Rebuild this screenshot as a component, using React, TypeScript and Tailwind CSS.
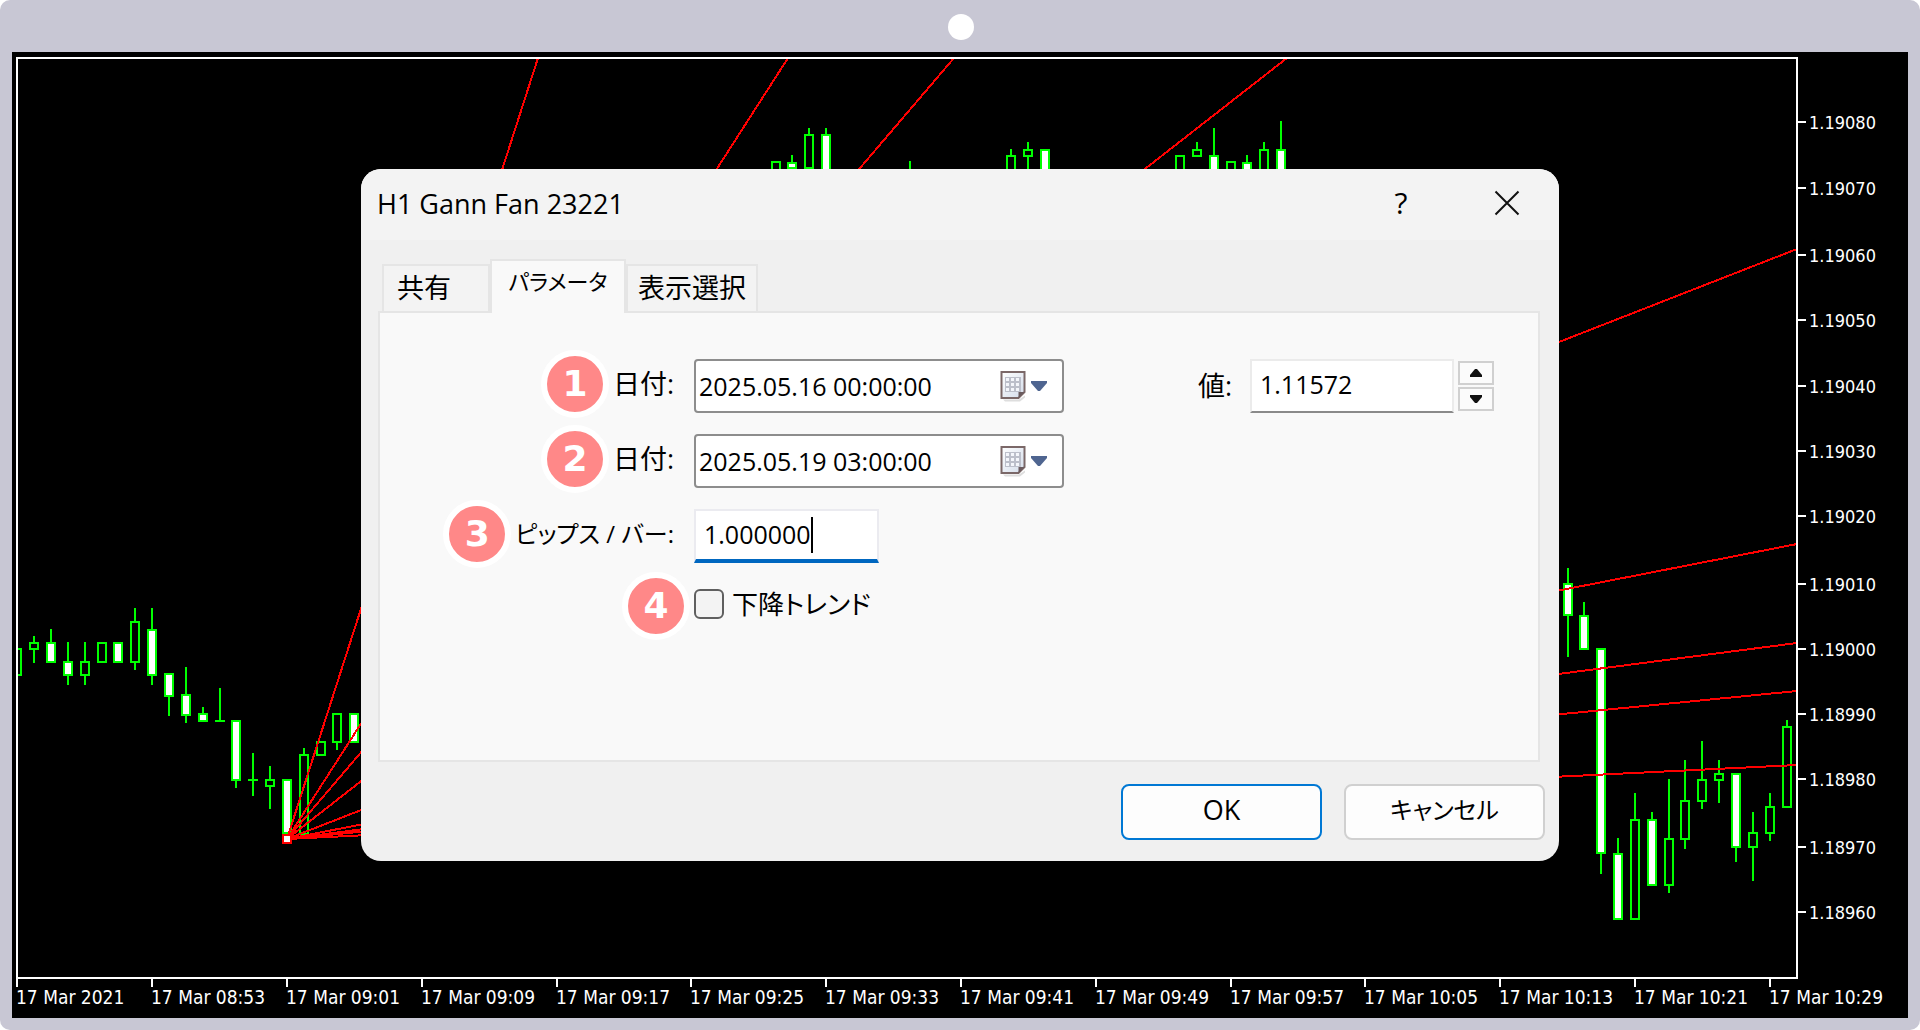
import type { ReactNode } from 'react';

type Candle = { i: number; high: number; top: number; bottom: number; low: number; filled?: boolean };

const JP = "font-['Open_Sans','Noto_Sans_CJK_JP',sans-serif]";

const BAR_STEP = 16.85;
const CHART_LEFT = 17.3;
const barX = (i: number) => Math.round(CHART_LEFT + i * BAR_STEP);

const CANDLES: Candle[] = [
  { i: 0, high: 649, top: 649, bottom: 675, low: 675 },
  { i: 1, high: 636, top: 643, bottom: 649, low: 662 },
  { i: 2, high: 629, top: 643, bottom: 662, low: 662, filled: true },
  { i: 3, high: 642, top: 662, bottom: 675, low: 684, filled: true },
  { i: 4, high: 642, top: 662, bottom: 675, low: 684 },
  { i: 5, high: 643, top: 643, bottom: 662, low: 662 },
  { i: 6, high: 643, top: 643, bottom: 662, low: 662, filled: true },
  { i: 7, high: 608, top: 622, bottom: 662, low: 669 },
  { i: 8, high: 608, top: 630, bottom: 675, low: 684, filled: true },
  { i: 9, high: 674, top: 674, bottom: 696, low: 715, filled: true },
  { i: 10, high: 667, top: 695, bottom: 715, low: 722, filled: true },
  { i: 11, high: 707, top: 714, bottom: 721, low: 721, filled: true },
  { i: 12, high: 688, top: 721, bottom: 721, low: 721 },
  { i: 13, high: 721, top: 721, bottom: 780, low: 787, filled: true },
  { i: 14, high: 753, top: 780, bottom: 780, low: 795 },
  { i: 15, high: 766, top: 780, bottom: 786, low: 808 },
  { i: 16, high: 780, top: 780, bottom: 833, low: 833, filled: true },
  { i: 17, high: 748, top: 755, bottom: 834, low: 834 },
  { i: 18, high: 742, top: 742, bottom: 755, low: 755 },
  { i: 19, high: 714, top: 714, bottom: 742, low: 749 },
  { i: 20, high: 714, top: 714, bottom: 742, low: 742, filled: true },
  { i: 45, high: 162, top: 162, bottom: 190, low: 190 },
  { i: 46, high: 155, top: 163, bottom: 168, low: 168, filled: true },
  { i: 47, high: 128, top: 135, bottom: 168, low: 168 },
  { i: 48, high: 128, top: 135, bottom: 190, low: 190, filled: true },
  { i: 53, high: 161, top: 190, bottom: 200, low: 200 },
  { i: 59, high: 149, top: 156, bottom: 190, low: 190 },
  { i: 60, high: 142, top: 150, bottom: 156, low: 190 },
  { i: 61, high: 150, top: 150, bottom: 190, low: 190, filled: true },
  { i: 69, high: 156, top: 156, bottom: 190, low: 190 },
  { i: 70, high: 142, top: 150, bottom: 156, low: 156 },
  { i: 71, high: 128, top: 156, bottom: 190, low: 190, filled: true },
  { i: 72, high: 162, top: 162, bottom: 190, low: 190 },
  { i: 73, high: 155, top: 163, bottom: 190, low: 190, filled: true },
  { i: 74, high: 142, top: 150, bottom: 190, low: 190 },
  { i: 75, high: 121, top: 150, bottom: 190, low: 190, filled: true },
  { i: 92, high: 568, top: 584, bottom: 615, low: 656, filled: true },
  { i: 93, high: 602, top: 616, bottom: 649, low: 649, filled: true },
  { i: 94, high: 649, top: 649, bottom: 853, low: 873, filled: true },
  { i: 95, high: 838, top: 854, bottom: 919, low: 919, filled: true },
  { i: 96, high: 793, top: 820, bottom: 919, low: 919 },
  { i: 97, high: 812, top: 820, bottom: 885, low: 885, filled: true },
  { i: 98, high: 779, top: 839, bottom: 885, low: 892 },
  { i: 99, high: 760, top: 801, bottom: 839, low: 848 },
  { i: 100, high: 741, top: 780, bottom: 801, low: 808 },
  { i: 101, high: 760, top: 774, bottom: 780, low: 802 },
  { i: 102, high: 773, top: 774, bottom: 847, low: 861, filled: true },
  { i: 103, high: 812, top: 833, bottom: 847, low: 880 },
  { i: 104, high: 793, top: 807, bottom: 833, low: 840 },
  { i: 105, high: 720, top: 727, bottom: 807, low: 807 },
];

const FAN_ORIGIN = { x: 287, y: 839 };

const FAN_ENDS = [
  [538, 58],
  [788, 58],
  [954, 58],
  [1287, 58],
  [1797, 249],
  [1797, 544],
  [1797, 643],
  [1797, 691],
  [1797, 765],
];

const PRICES = [
  { label: '1.19080', y: 122 },
  { label: '1.19070', y: 188 },
  { label: '1.19060', y: 255 },
  { label: '1.19050', y: 320 },
  { label: '1.19040', y: 386 },
  { label: '1.19030', y: 451 },
  { label: '1.19020', y: 516 },
  { label: '1.19010', y: 584 },
  { label: '1.19000', y: 649 },
  { label: '1.18990', y: 714 },
  { label: '1.18980', y: 779 },
  { label: '1.18970', y: 847 },
  { label: '1.18960', y: 912 },
];

const TIMES = [
  '17 Mar 2021',
  '17 Mar 08:53',
  '17 Mar 09:01',
  '17 Mar 09:09',
  '17 Mar 09:17',
  '17 Mar 09:25',
  '17 Mar 09:33',
  '17 Mar 09:41',
  '17 Mar 09:49',
  '17 Mar 09:57',
  '17 Mar 10:05',
  '17 Mar 10:13',
  '17 Mar 10:21',
  '17 Mar 10:29',
];

function Chart() {
  return (
    <svg
      viewBox="12 52 1896 966"
      className="block h-auto w-full bg-black font-['DejaVu_Sans_Condensed','DejaVu_Sans',sans-serif]"
      role="img"
      aria-label="H1 Gann Fan"
    >
      <clipPath id="plot">
        <rect x="18" y="58" width="1779" height="919" />
      </clipPath>

      <g clipPath="url(#plot)" shapeRendering="crispEdges">
        {CANDLES.map((c) => {
          const x = barX(c.i);
          return (
            <g key={c.i} stroke="#00ff00" strokeWidth="2">
              <line x1={x} x2={x} y1={c.high} y2={c.top} />
              <line x1={x} x2={x} y1={c.bottom} y2={c.low + 1} />
              {c.top === c.bottom ? (
                <line x1={x - 5} x2={x + 5} y1={c.top} y2={c.top} />
              ) : (
                <rect x={x - 4} y={c.top} width="8" height={c.bottom - c.top} fill={c.filled ? '#fff' : '#000'} />
              )}
            </g>
          );
        })}
        {FAN_ENDS.map(([x, y]) => (
          <line key={`${x}-${y}`} x1={FAN_ORIGIN.x} y1={FAN_ORIGIN.y} x2={x} y2={y} stroke="#ff0000" strokeWidth="2" />
        ))}
        <rect x="283" y="835" width="8" height="8" fill="#fff" stroke="#ff0000" strokeWidth="2" />
      </g>

      {/* frame and ticks */}
      <g stroke="#fff" strokeWidth="2" fill="none" shapeRendering="crispEdges">
        <rect x="17" y="58" width="1780" height="920" />
        {PRICES.map((p) => (
          <line key={p.label} x1="1797" x2="1806" y1={p.y} y2={p.y} />
        ))}
        {TIMES.map((t, n) => (
          <line key={t} x1={barX(n * 8)} x2={barX(n * 8)} y1="978" y2="987" />
        ))}
      </g>

      <g fill="#fff">
        {PRICES.map((p) => (
          <text key={p.label} x="1809" y={p.y + 7} fontSize="18">
            {p.label}
          </text>
        ))}
        {TIMES.map((t, n) => (
          <text key={t} x={barX(n * 8) - 1} y="1004" fontSize="19">
            {t}
          </text>
        ))}
      </g>
    </svg>
  );
}

function CalendarIcon() {
  return (
    <svg width="26" height="32" viewBox="0 0 26 32" aria-hidden="true">
      <defs>
        <linearGradient id="page" x1="0" y1="0" x2="1" y2="1">
          <stop offset="0" stopColor="#ffffff" />
          <stop offset="1" stopColor="#d3dcea" />
        </linearGradient>
      </defs>
      <path d="M3 29.500h16l6-4v2l-5 4H5z" fill="#dedede" />
      <path d="M1.500 2h23v20l-6 6h-17z" fill="url(#page)" stroke="#7b6868" strokeWidth="2" />
      <path d="M18.500 28v-6h6z" fill="#6a5b5e" />
      <rect x="5" y="7" width="16" height="15" fill="#bcbfca" />
      <g fill="#f4f6fb">
        {[8, 13, 18].map((y) => [6, 11, 16].map((x) => <rect key={`${x}-${y}`} x={x} y={y} width="3" height="3" />))}
      </g>
    </svg>
  );
}

function Badge({ n }: { n: number }) {
  return (
    <span className="flex size-[68px] shrink-0 items-center justify-center rounded-full border-6 border-white bg-[#ff8888] font-['DejaVu_Sans',sans-serif] text-4xl font-bold text-white">
      {n}
    </span>
  );
}

function LabelCell({ n, children }: { n: number; children: ReactNode }) {
  return (
    <div className="flex h-[54px] w-[314px] items-center justify-end gap-1 pr-5 pb-1">
      <Badge n={n} />
      {children}
    </div>
  );
}

function DateField({ id, value }: { id: string; value: string }) {
  return (
    <div className="flex h-[54px] w-[370px] items-center rounded-sm border-2 border-[#8d8d8d] bg-white pr-[14px] pl-[3px]">
      <input id={id} defaultValue={value} className="min-w-0 flex-1 pt-[2px] text-[25px] text-black outline-none" />
      <button type="button" aria-label="カレンダーを開く" className="flex items-center gap-1">
        <CalendarIcon />
        <svg width="18" height="12" viewBox="0 0 18 12" aria-hidden="true">
          <path d="M1 1h16v2l-7 8h-2l-7-8z" fill="#4f6590" />
        </svg>
      </button>
    </div>
  );
}

function Tab({ active, className, children }: { active?: boolean; className: string; children: ReactNode }) {
  return (
    <button
      type="button"
      role="tab"
      aria-selected={!!active}
      className={`border-2 border-b-0 border-[#e5e5e5] ${active ? 'relative -mb-[2px] h-[54px] bg-[#f9f9f9] pb-3' : 'h-[47px] bg-[#f3f3f3]'} ${className}`}
    >
      {children}
    </button>
  );
}

function SpinButton({ label, d }: { label: string; d: string }) {
  return (
    <button
      type="button"
      aria-label={label}
      className="flex h-6 w-9 items-center justify-center border-2 border-[#d0d0d0] bg-[#fbfbfb]"
    >
      <svg width="14" height="10" viewBox="0 0 14 10" aria-hidden="true">
        <path d={d} fill="#111" />
      </svg>
    </button>
  );
}

function Dialog() {
  return (
    <div
      role="dialog"
      aria-labelledby="dialog-title"
      className={`w-full max-w-[1198px] overflow-hidden rounded-[20px] bg-[#f0f0f0] text-black ${JP} [font-feature-settings:'palt']`}
    >
      <header className="flex h-[71px] items-center bg-[#f3f3f3] pr-8 pl-4">
        <h1 id="dialog-title" className="flex-1 text-[27px]">H1 Gann Fan 23221</h1>
        <div className="flex items-center gap-[66px] pb-1">
          <button type="button" aria-label="ヘルプ" className="w-10 text-3xl">?</button>
          <button type="button" aria-label="閉じる" className="flex w-10 justify-center">
            <svg width="26" height="26" viewBox="0 0 26 26" aria-hidden="true">
              <path d="M1.500 1.500l23 23M24.500 1.500l-23 23" stroke="#111" strokeWidth="2" />
            </svg>
          </button>
        </div>
      </header>

      <div className="pt-[19px] pr-[19px] pl-[17px]">
        <div role="tablist" className="flex items-end px-1 text-[27px]">
          <Tab className="w-[108px] pr-6">共有</Tab>
          <Tab active className="w-[136px] text-[22px]">パラメータ</Tab>
          <Tab className="w-[132px]">表示選択</Tab>
        </div>

        <form className="flex min-h-[451px] flex-col gap-[21px] border-2 border-[#e5e5e5] bg-[#f9f9f9] pt-[46px] text-[27px]">
          <div className="flex items-center">
            <LabelCell n={1}>
              <label htmlFor="date-1">日付:</label>
            </LabelCell>
            <DateField id="date-1" value="2025.05.16 00:00:00" />
            <div className="ml-auto flex items-center pr-11">
              <label htmlFor="price" className="pr-[18px]">値:</label>
              <input
                id="price"
                defaultValue="1.11572"
                className="h-[54px] w-[204px] border-2 border-[#ebebeb] border-b-[#8a8a8a] bg-white pb-1 pl-2 text-[25px] outline-none"
              />
              <div className="ml-1 flex flex-col gap-[2px]">
                <SpinButton label="増やす" d="M1 9v-2l5-6h2l5 6v2z" />
                <SpinButton label="減らす" d="M1 1v2l5 6h2l5-6v-2z" />
              </div>
            </div>
          </div>

          <div className="flex items-center">
            <LabelCell n={2}>
              <label htmlFor="date-2">日付:</label>
            </LabelCell>
            <DateField id="date-2" value="2025.05.19 03:00:00" />
          </div>

          <div className="flex items-center">
            <LabelCell n={3}>
              <label htmlFor="pips" className="text-2xl">ピップス / バー:</label>
            </LabelCell>
            <div className="flex h-[54px] w-[185px] items-center border-2 border-b-4 border-[#ebebf0] border-b-[#0067c0] bg-white pl-2">
              <input id="pips" defaultValue="1.000000" className="[field-sizing:content] text-[25px] outline-none" />
              <span className="h-9 w-[2px] bg-black" />
            </div>
          </div>

          <div className="flex h-10 items-center">
            <div className="flex w-[314px] items-center justify-end pt-1 pr-1">
              <Badge n={4} />
            </div>
            <input
              id="down"
              type="checkbox"
              className="size-[30px] appearance-none rounded-md border-2 border-[#5f5f5f] bg-[#f3f3f3]"
            />
            <label htmlFor="down" className="pl-2 text-[26px]">下降トレンド</label>
          </div>
        </form>
      </div>

      <footer className="flex justify-end gap-[22px] px-[14px] pt-[22px] pb-[21px]">
        <button type="button" className="h-14 w-[201px] rounded-lg border-2 border-[#0078d4] bg-[#fdfdfd] pb-1 text-[27px]">OK</button>
        <button type="button" className="h-14 w-[201px] rounded-lg border-2 border-[#d0d0d0] bg-[#fdfdfd] pb-1 text-2xl">キャンセル</button>
      </footer>
    </div>
  );
}

export default function App() {
  return (
    <main className="min-h-screen bg-white">
      <div className="rounded-[10px] bg-[#c8c7d4] px-3 pb-3">
        <div className="flex h-[52px] items-center justify-center pt-[2px] pl-[2px]">
          <span className="size-[26px] rounded-full bg-white" />
        </div>
        <div className="relative">
          <Chart />
          <div className="absolute inset-0 flex items-start justify-center pt-[117px]">
            <Dialog />
          </div>
        </div>
      </div>
    </main>
  );
}
